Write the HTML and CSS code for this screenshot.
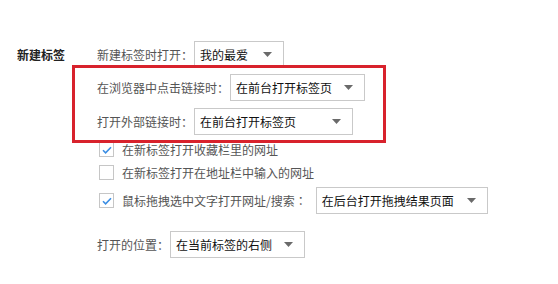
FILE: index.html
```html
<!DOCTYPE html>
<html lang="zh-CN">
<head>
<meta charset="utf-8" />
<title>新建标签</title>
<link rel="stylesheet" href="styles.css">
</head>
<body>
	<div class="section">
		<div class="section-title">新建标签</div>
		<div class="section-body">
			<div class="row">
				<span class="label">新建标签时打开<span class="colon">：</span></span>
				<span class="select w90">我的最爱<svg class="arrow" width="9" height="5" viewBox="0 0 9 5"><path d="M0 0h9L4.5 5z" fill="#6a6a6a"/></svg></span>
			</div>
			<div class="mark">
				<div class="row">
					<span class="label">在浏览器中点击链接时<span class="colon">：</span></span>
					<span class="select w135">在前台打开标签页<svg class="arrow" width="9" height="5" viewBox="0 0 9 5"><path d="M0 0h9L4.5 5z" fill="#6a6a6a"/></svg></span>
				</div>
				<div class="row gap7">
					<span class="label">打开外部链接时<span class="colon">：</span></span>
					<span class="select w159">在前台打开标签页<svg class="arrow" width="9" height="5" viewBox="0 0 9 5"><path d="M0 0h9L4.5 5z" fill="#6a6a6a"/></svg></span>
				</div>
			</div>
			<div class="checks">
				<label class="check">
					<span class="box"><svg width="12" height="12" viewBox="0 0 12 12"><path d="M2 6.2l2.6 2.6L10 3.2" fill="none" stroke="#3b8ee4" stroke-width="1.6"/></svg></span>
					在新标签打开收藏栏里的网址
				</label>
				<label class="check">
					<span class="box"></span>
					在新标签打开在地址栏中输入的网址
				</label>
				<label class="check tall">
					<span class="box"><svg width="12" height="12" viewBox="0 0 12 12"><path d="M2 6.2l2.6 2.6L10 3.2" fill="none" stroke="#3b8ee4" stroke-width="1.6"/></svg></span>
					鼠标拖拽选中文字打开网址/搜索<span class="colon">：</span>
					<span class="select w172 push">在后台打开拖拽结果页面<svg class="arrow" width="9" height="5" viewBox="0 0 9 5"><path d="M0 0h9L4.5 5z" fill="#6a6a6a"/></svg></span>
				</label>
			</div>
			<div class="row position">
				<span class="label">打开的位置<span class="colon">：</span></span>
				<span class="select w135">在当前标签的右侧<svg class="arrow" width="9" height="5" viewBox="0 0 9 5"><path d="M0 0h9L4.5 5z" fill="#6a6a6a"/></svg></span>
			</div>
		</div>
	</div>
</body>
</html>
```

FILE: styles.css
```css
body {
	margin: 0;
	padding: 41px 0 0 17px;
	background-color: #FFFFFF;
	font-family: "Noto Sans CJK SC", "Microsoft YaHei", sans-serif;
	font-size: 12px;
	color: #555555;
}

.section {
	display: flex;
	align-items: flex-start;
}

.section-title {
	width: 80px;
	line-height: 27px;
	font-weight: bold;
	color: #222222;
}

.section-body {
	display: flex;
	flex-direction: column;
}

.row {
	display: flex;
	align-items: center;
	height: 27px;
}

.gap7 {
	margin-top: 7px;
}

.label {
	white-space: nowrap;
}

/* centred full-width colon, as on Windows */
.colon {
	font-family: "Noto Sans CJK TC", "Noto Sans CJK SC", sans-serif;
}

.select {
	display: flex;
	align-items: center;
	justify-content: space-between;
	box-sizing: border-box;
	height: 27px;
	margin-left: 1px;
	padding: 0 11px 0 5px;
	border: 1px solid #c9c9c9;
	background: #FFFFFF;
	color: #111111;
	white-space: nowrap;
}

.w90 {
	width: 90px;
}

.w135 {
	width: 135px;
}

.w159 {
	width: 159px;
}

.w172 {
	width: 172px;
}

.push {
	margin-left: 9px;
}

.arrow {
	flex-shrink: 0;
}

/* red annotation frame drawn over the settings */
.mark {
	position: relative;
	z-index: 1;
	box-sizing: border-box;
	width: 314px;
	margin: -3px 0 0 -25px;
	padding: 6px 0 5px 22px;
	border: 3px solid #d8222c;
}

.checks {
	display: flex;
	flex-direction: column;
	margin-top: -5px;
	padding-left: 2px;
}

.check {
	display: flex;
	align-items: center;
	height: 23px;
	white-space: nowrap;
}

.check.tall {
	height: 27px;
	margin-top: 3px;
}

.box {
	display: flex;
	align-items: center;
	justify-content: center;
	box-sizing: border-box;
	width: 15px;
	height: 15px;
	margin-right: 8px;
	border: 1px solid #c6c6c6;
	background: #FFFFFF;
}

.position {
	margin-top: 17px;
}
```
